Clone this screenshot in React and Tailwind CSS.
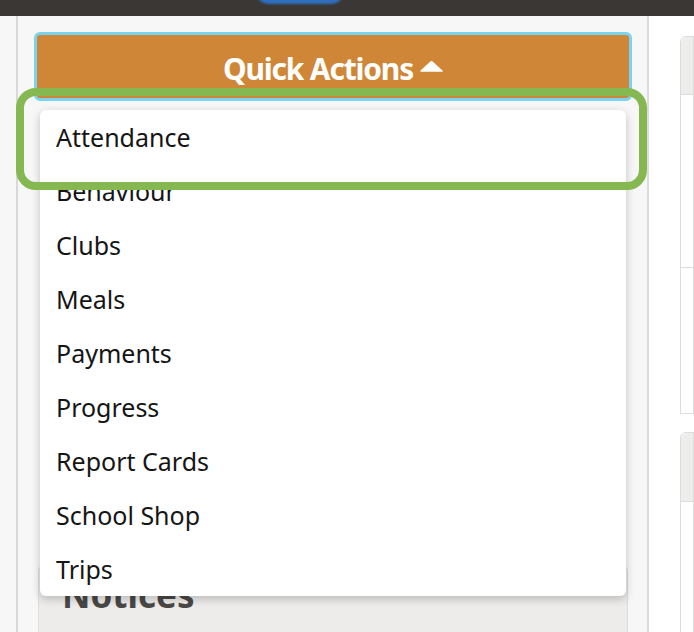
import React from "react";

const ITEMS = [
  "Attendance",
  "Behaviour",
  "Clubs",
  "Meals",
  "Payments",
  "Progress",
  "Report Cards",
  "School Shop",
  "Trips",
];

function App() {
  return (
    <div className="relative w-[694px] h-[632px] overflow-hidden bg-[#f7f7f7] font-['Noto_Sans',sans-serif]">
      {/* top bar */}
      <div className="relative h-4 bg-[#3b3734]">
        <div className="absolute left-[256px] top-[-22px] w-[88px] h-[26px] rounded-full bg-[#2f6fbe] blur-[1px]" />
      </div>

      <div className="flex h-[616px]">
        {/* left strip */}
        <div className="w-4 shrink-0 border-r-2 border-[#d8d8d8] box-content" />

        {/* main column */}
        <div className="relative w-[631px] shrink-0 border-r-2 border-[#dcdcdc] pl-4 pr-[15px] pt-4">
          <button className="flex h-[69px] w-full items-center justify-center gap-[7px] rounded-md border-[3px] border-[#79d4ef] bg-[#cf8636] pt-[4px] text-white">
            <span className="text-[30px] font-bold tracking-[-1.2px]">
              Quick Actions
            </span>
            <svg width="23" height="11" viewBox="0 0 23 11" className="mt-[-4px]">
              <path d="M11.5 0.5 L22 10 L1 10 Z" fill="#fff" stroke="#fff" strokeLinejoin="round" strokeWidth="1.5" />
            </svg>
          </button>

          {/* Notices panel behind the menu */}
          <div className="mx-1 mt-[464px] h-[200px] rounded-t-md border border-[#dcdcdc] bg-[#edecea] px-[23px] pt-[3px]">
            <h2 className="text-[35px] font-bold text-[#4a4846]">Notices</h2>
          </div>

          {/* dropdown menu */}
          <ul className="absolute left-[22px] right-[21px] top-[94px] rounded-md bg-white shadow-[0_3px_10px_rgba(0,0,0,0.22)]">
            {ITEMS.map((item) => (
              <li key={item} className="flex h-[54px] items-center px-4 pt-[2px] text-[25px] text-[#151515]">
                {item}
              </li>
            ))}
          </ul>
        </div>

        {/* right column */}
        <div className="flex-1 bg-white pl-[31px] pt-5">
          <div className="h-[378px] rounded-tl-md border border-[#dcdcdc]">
            <div className="h-[58px] rounded-tl-md bg-[#eeedeb] border-b border-[#dcdcdc]" />
            <div className="h-[173px] border-b border-[#dcdcdc]" />
          </div>
          <div className="mt-[18px] h-[220px] rounded-tl-md border border-[#dcdcdc]">
            <div className="h-[69px] rounded-tl-md bg-[#eeedeb] border-b border-[#dcdcdc]" />
          </div>
        </div>
      </div>

      {/* green highlight outline */}
      <div className="absolute left-4 top-[88px] h-[102px] w-[631px] rounded-[20px] border-[8px] border-[#86b852]" />
    </div>
  );
}

export default App;
